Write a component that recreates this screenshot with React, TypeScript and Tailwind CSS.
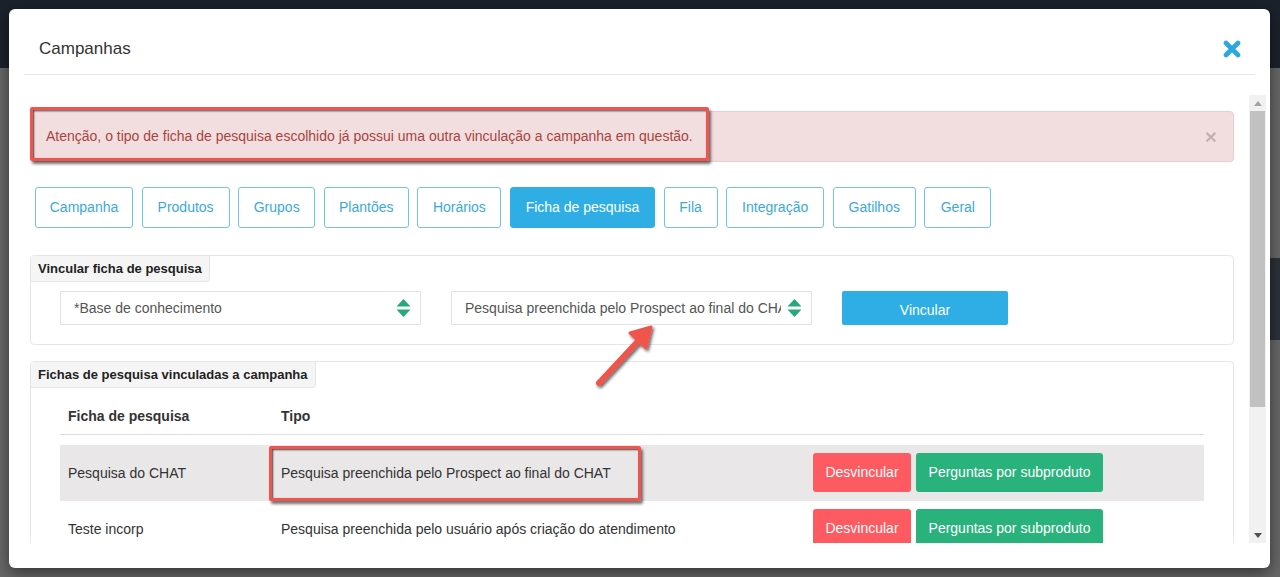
import React from 'react'

const font = { fontFamily: '"Liberation Sans", Arial, sans-serif' }

const tabs = [
  { label: 'Campanha', w: 'w-[98px]' },
  { label: 'Produtos', w: 'w-[88px]' },
  { label: 'Grupos', w: 'w-[77px]' },
  { label: 'Plantões', w: 'w-[85px]' },
  { label: 'Horários', w: 'w-[84px]' },
  { label: 'Ficha de pesquisa', w: 'w-[145px]' },
  { label: 'Fila', w: 'w-[54px]' },
  { label: 'Integração', w: 'w-[98px]' },
  { label: 'Gatilhos', w: 'w-[83px]' },
  { label: 'Geral', w: 'w-[67px]' },
]

const rows = [
  { nome: 'Pesquisa do CHAT', tipo: 'Pesquisa preenchida pelo Prospect ao final do CHAT', active: true },
  { nome: 'Teste incorp', tipo: 'Pesquisa preenchida pelo usuário após criação do atendimento', active: false },
]

function SelectArrows() {
  return (
    <svg width="15" height="20" viewBox="0 0 15 20" className="shrink-0">
      <path d="M7.5 1 L14.5 8.5 H0.5 Z" fill="#27a878" />
      <path d="M7.5 19 L14.5 11.5 H0.5 Z" fill="#27a878" />
    </svg>
  )
}

function Select({ text }: { text: string }) {
  return (
    <div className="flex h-[34px] w-[361px] items-center border border-[#e3e3e3] bg-white pl-[13px] pr-[9px] text-[14px] text-[#555]">
      <span className="flex-1 overflow-hidden whitespace-nowrap">{text}</span>
      <span className="ml-[6px]"><SelectArrows /></span>
    </div>
  )
}

function Legend({ children }: { children: React.ReactNode }) {
  return (
    <div className="inline-block h-[26px] rounded-br-[4px] border-r border-b border-[#e6e6e6] bg-[#f5f5f5] px-[7px] text-[13px] font-bold leading-[26px] text-[#222]">
      {children}
    </div>
  )
}

const annot = 'pointer-events-none absolute border-[3px] border-[#f0544c] rounded-[2px] shadow-[inset_1px_1px_2px_rgba(0,0,0,0.7),2px_3px_3px_rgba(0,0,0,0.55)]'

export default function App() {
  return (
    <div className="relative h-[577px] w-[1280px] overflow-hidden bg-[#686868]" style={font}>
      {/* page behind the overlay */}
      <div className="h-[68px] bg-[#1b222c]" />
      <div className="ml-auto mt-[190px] h-[82px] w-[30px] bg-[#2c323a]" />

      {/* modal */}
      <div className="absolute left-[9px] top-[9px] flex h-[559px] w-[1261px] flex-col rounded-[6px] bg-white shadow-[0_5px_15px_rgba(0,0,0,0.5)]">
        <div className="mx-[15px] flex items-center justify-between border-b border-[#e5e5e5] pl-[15px] pr-[14px] pt-[29px] pb-[14px]">
          <h4 className="text-[17px] leading-[22px] text-[#333]">Campanhas</h4>
          <svg width="18" height="18" viewBox="0 0 18 18">
            <path d="M3 3 L15 15 M15 3 L3 15" stroke="#2aa8e0" strokeWidth="4.6" strokeLinecap="round" />
          </svg>
        </div>

        <div className="ml-[15px] mt-[20px] flex h-[448px] w-[1242px] overflow-hidden">
          <div className="flex-1 overflow-hidden pl-[6px] pr-[15px] pt-[16px]">
            {/* alert */}
            <div className="relative flex h-[51px] items-center justify-between rounded-[4px] border border-[#ebccd1] bg-[#f2dede] pl-[15px] pr-[16px] text-[14px] text-[#a94442]">
              <span>Atenção, o tipo de ficha de pesquisa escolhido já possui uma outra vinculação a campanha em questão.</span>
              <span className="text-[21px] font-bold leading-none text-black opacity-20">×</span>
            </div>

            {/* tabs */}
            <div className="mt-[25px] flex gap-[8.6px] pl-[5px]">
              {tabs.map(t =>
                t.label === 'Ficha de pesquisa' ? (
                  <div key={t.label} className={`flex h-[41px] items-center justify-center rounded-[3px] border border-[#2eaee5] bg-[#2eaee5] text-[14px] text-white ${t.w}`}>
                    {t.label}
                  </div>
                ) : (
                  <div key={t.label} className={`flex h-[41px] items-center justify-center rounded-[3px] border border-[#6cc5ee] bg-white text-[14px] text-[#3ca8de] ${t.w}`}>
                    {t.label}
                  </div>
                )
              )}
            </div>

            {/* vincular panel */}
            <div className="mt-[27px] h-[90px] rounded-[4px] border border-[#e6e6e6]">
              <Legend>Vincular ficha de pesquisa</Legend>
              <div className="mt-[9px] flex gap-[30px] pl-[29px]">
                <Select text="*Base de conhecimento" />
                <Select text="Pesquisa preenchida pelo Prospect ao final do CHAT" />
                <div className="flex h-[34px] w-[166px] items-center justify-center rounded-[2px] bg-[#2eaee5] pt-[4px] text-[14px] text-white">
                  Vincular
                </div>
              </div>
            </div>

            {/* vinculadas panel */}
            <div className="mt-[16px] h-[200px] rounded-[4px] border border-[#e6e6e6]">
              <Legend>Fichas de pesquisa vinculadas a campanha</Legend>
              <div className="mx-[29px] mt-[10px] text-[14px] text-[#333]">
                <div className="flex h-[37px] items-center border-b border-[#dedede] font-bold">
                  <div className="w-[213px] pl-[8px]">Ficha de pesquisa</div>
                  <div className="pl-[8px]">Tipo</div>
                </div>
                <div className="h-[10px]" />
                {rows.map(r => (
                  <div key={r.nome} className={`flex h-[56px] items-center ${r.active ? 'bg-[#e9e7e8]' : 'bg-white'}`}>
                    <div className="w-[213px] pl-[8px]">{r.nome}</div>
                    <div className="w-[532px] pl-[8px]">{r.tipo}</div>
                    <div className="flex gap-[5px] self-start pl-[8px] pt-[8px]">
                      <div className="flex h-[39px] w-[98px] items-center justify-center rounded-[3px] bg-[#fd5a61] text-white">Desvincular</div>
                      <div className="flex h-[39px] w-[187px] items-center justify-center rounded-[3px] bg-[#2ab27d] text-white">Perguntas por subproduto</div>
                    </div>
                  </div>
                ))}
              </div>
            </div>
          </div>

          {/* scrollbar */}
          <div className="flex w-[17px] flex-col items-center bg-[#f1f1f1]">
            <div className="flex h-[16px] items-center">
              <svg width="8" height="5" viewBox="0 0 8 5"><path d="M4 0 L8 5 H0 Z" fill="#a3a3a3" /></svg>
            </div>
            <div className="h-[296px] w-[15px] bg-[#c1c1c1]" />
            <div className="flex-1" />
            <div className="flex h-[16px] items-center">
              <svg width="8" height="5" viewBox="0 0 8 5"><path d="M0 0 H8 L4 5 Z" fill="#505050" /></svg>
            </div>
          </div>
        </div>
      </div>

      {/* annotations */}
      <div className={`${annot} left-[30px] top-[107px] h-[54px] w-[679px]`} />
      <div className={`${annot} left-[269px] top-[446px] h-[55px] w-[372px]`} />
      <svg className="pointer-events-none absolute left-[585px] top-[320px]" width="80" height="75" viewBox="0 0 80 75">
        <defs>
          <filter id="sh" x="-30%" y="-30%" width="160%" height="160%">
            <feDropShadow dx="1.5" dy="2" stdDeviation="1.5" floodColor="#000" floodOpacity="0.6" />
          </filter>
        </defs>
        <g filter="url(#sh)">
          <path d="M14 63 L56 18" stroke="#f0544c" strokeWidth="6" strokeLinecap="round" />
          <path d="M66 7 L61 28 L45 13 Z" fill="#f0544c" stroke="#f0544c" strokeWidth="3" strokeLinejoin="round" />
        </g>
      </svg>
    </div>
  )
}
